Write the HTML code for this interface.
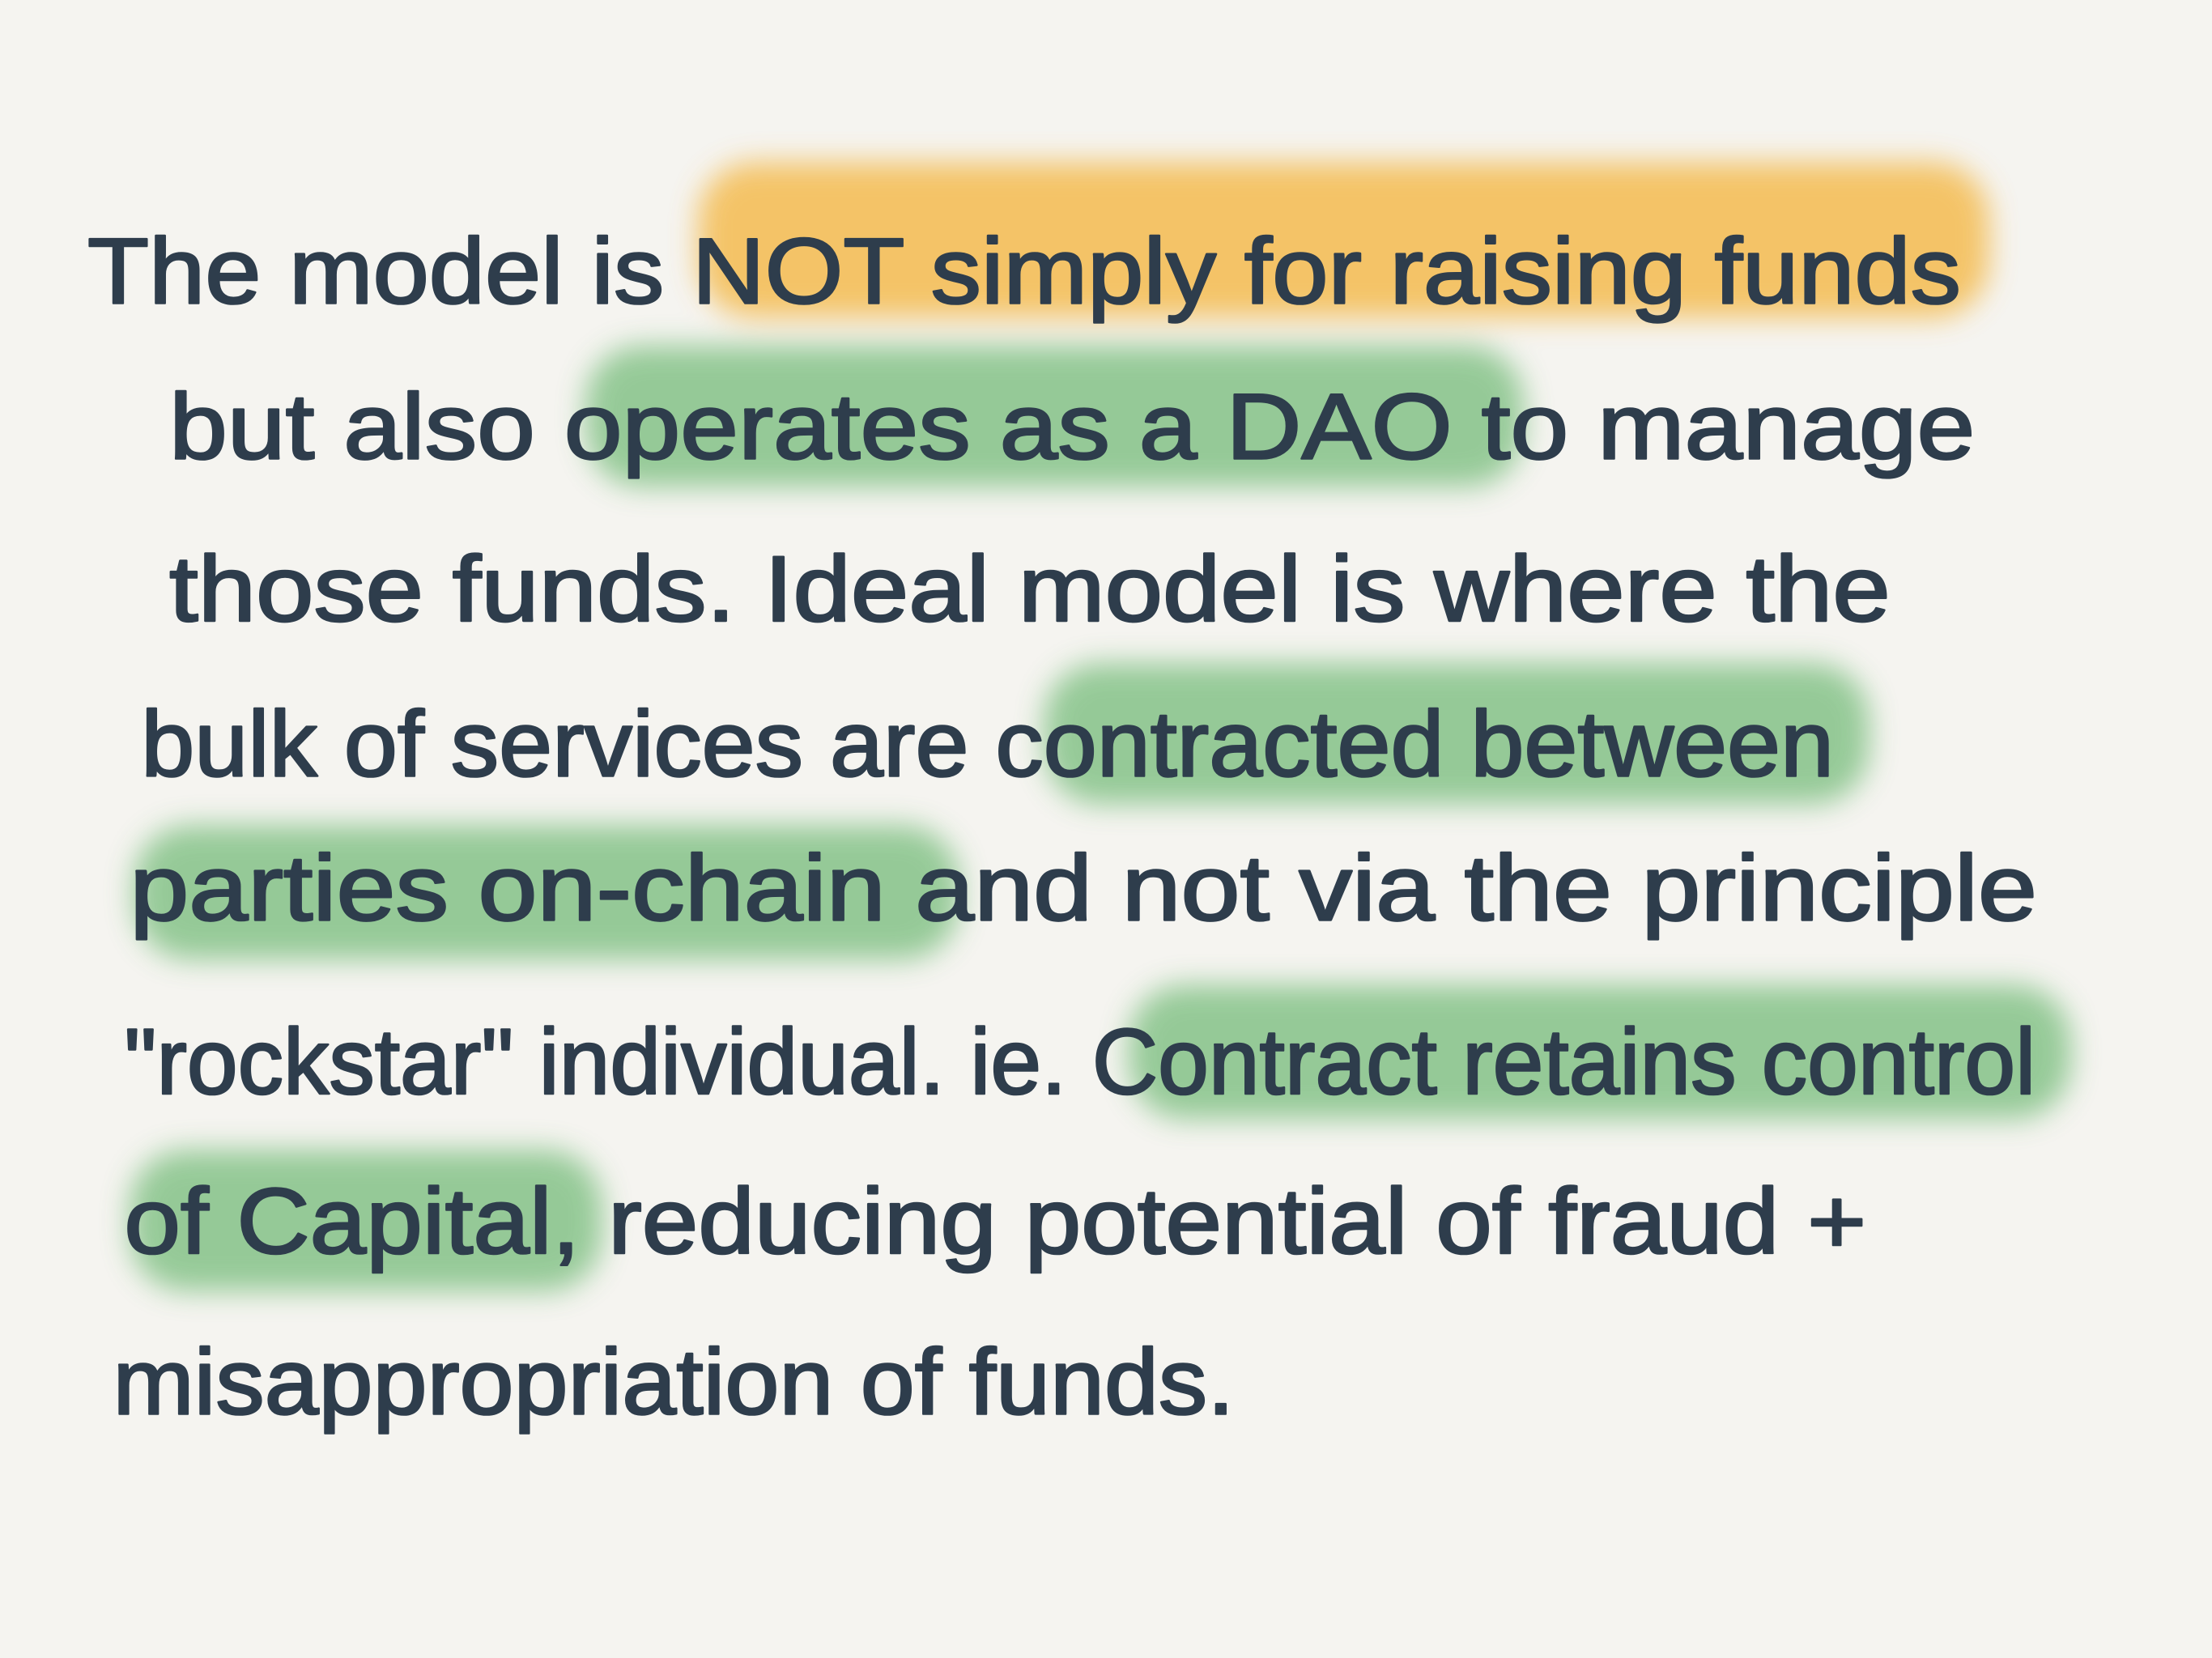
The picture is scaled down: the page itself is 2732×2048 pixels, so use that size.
<!DOCTYPE html>
<html><head><meta charset="utf-8">
<style>
html,body{margin:0;padding:0;background:#f5f4f0;}
svg{display:block;}
</style></head>
<body>
<svg width="2732" height="2048" viewBox="0 0 1568 1175" preserveAspectRatio="none" xmlns="http://www.w3.org/2000/svg">
<defs>
<filter id="b" x="-20%" y="-50%" width="140%" height="200%"><feGaussianBlur stdDeviation="10"/></filter>
</defs>
<rect width="1568" height="1175" fill="#f5f4f0"/>
<g filter="url(#b)" opacity="0.88">
<rect x="495" y="115" width="915" height="110" rx="40" fill="#f4bd55"/>
<rect x="415" y="245" width="665" height="100" rx="40" fill="#88c48b"/>
<rect x="740" y="470" width="585" height="100" rx="40" fill="#88c48b"/>
<rect x="95" y="585" width="585" height="95" rx="40" fill="#88c48b"/>
<rect x="800" y="698" width="668" height="95" rx="40" fill="#88c48b"/>
<rect x="92" y="815" width="335" height="100" rx="40" fill="#88c48b"/>
</g>
<g font-family="Liberation Sans, sans-serif" font-size="66" fill="#2e3d4c" stroke="#2e3d4c" stroke-width="1.5" stroke-linejoin="round">
<text x="62" y="215" textLength="1328" lengthAdjust="spacingAndGlyphs">The model is NOT simply for raising funds</text>
<text x="120" y="325" textLength="1280" lengthAdjust="spacingAndGlyphs">but also operates as a DAO to manage</text>
<text x="120" y="440" textLength="1220" lengthAdjust="spacingAndGlyphs">those funds. Ideal model is where the</text>
<text x="100" y="550" textLength="1200" lengthAdjust="spacingAndGlyphs">bulk of services are contracted between</text>
<text x="92" y="652" textLength="1352" lengthAdjust="spacingAndGlyphs">parties on-chain and not via the principle</text>
<text x="88" y="775" textLength="1355" lengthAdjust="spacingAndGlyphs">"rockstar" individual. ie. Contract retains control</text>
<text x="88" y="888" textLength="1235" lengthAdjust="spacingAndGlyphs">of Capital, reducing potential of fraud +</text>
<text x="80" y="1002" textLength="795" lengthAdjust="spacingAndGlyphs">misappropriation of funds.</text>
</g>
</svg>
</body></html>
